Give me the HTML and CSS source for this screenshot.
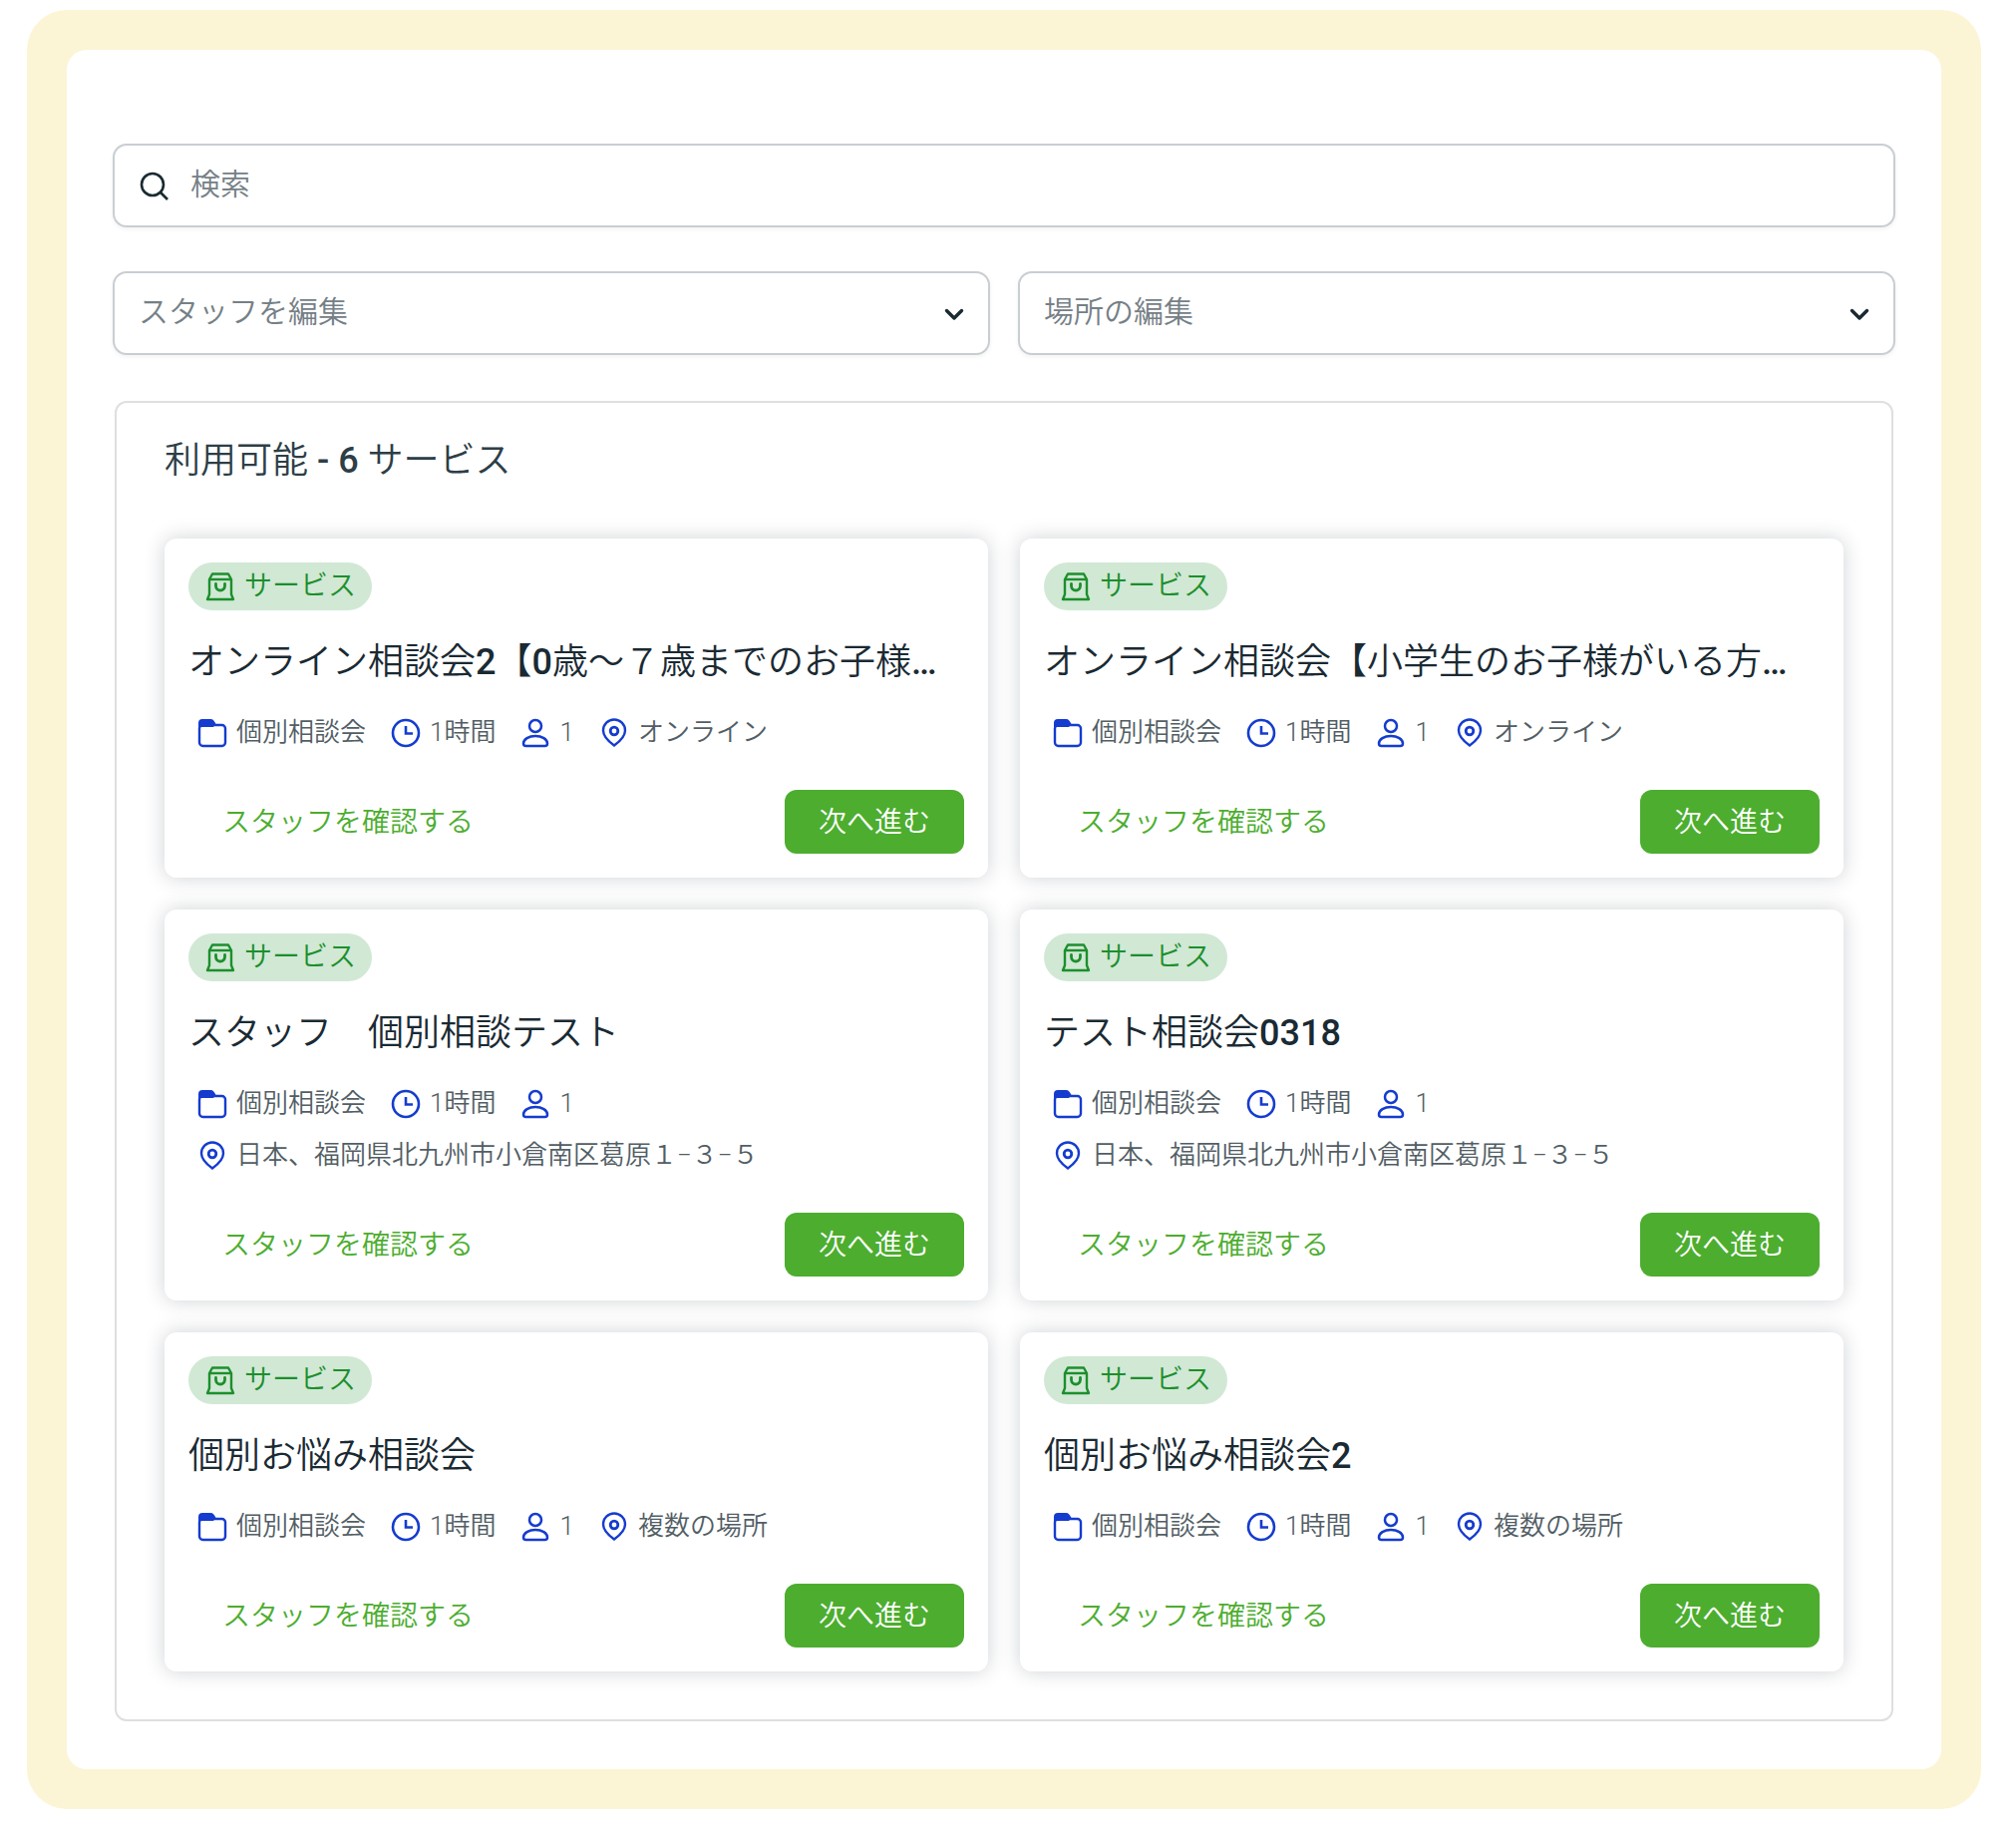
FILE: index.html
```html
<!DOCTYPE html>
<html lang="ja">
<head>
<meta charset="utf-8">
<meta name="viewport" content="width=device-width, initial-scale=1">
<title>サービス一覧</title>
<link rel="stylesheet" href="styles.css">
</head>
<body>
<svg class="sprite" aria-hidden="true">
  <symbol id="i-search" viewBox="0 0 32 32"><g fill="none" stroke="currentColor" stroke-width="2.6"><circle cx="14" cy="14" r="11"/><path d="M21.5 21.5 29 29"/></g></symbol>
  <symbol id="i-chevron" viewBox="0 0 32 32"><path d="M8.500 12.500 16 20l7.500-7.500" fill="none" stroke="currentColor" stroke-width="3.400" stroke-linecap="round" stroke-linejoin="round"/></symbol>
  <symbol id="i-bag" viewBox="0 0 32 32"><g fill="none" stroke="currentColor" stroke-width="2.400" stroke-linejoin="round"><path d="M5 9 8 3.500h16L27 9v15l2 5H3l2-5z"/><path d="M5 9h22"/><path d="M11.500 13.500v2a4.500 4.500 0 0 0 9 0v-2" stroke-width="2.800" stroke-linecap="round"/></g></symbol>
  <symbol id="i-folder" viewBox="0 0 32 32"><path d="M2 10V6a4 4 0 0 1 4-4h8c3 0 4 2 5.500 5L17 10z" fill="currentColor"/><rect x="3" y="8" width="26" height="21" rx="3.500" fill="none" stroke="currentColor" stroke-width="2.400"/></symbol>
  <symbol id="i-clock" viewBox="0 0 32 32"><g fill="none" stroke="currentColor" stroke-width="2.600"><circle cx="16" cy="16" r="13"/><path d="M16 9v7.500h7"/></g></symbol>
  <symbol id="i-person" viewBox="0 0 32 32"><g fill="none" stroke="currentColor" stroke-width="2.500"><circle cx="16" cy="9" r="6"/><path d="M4 26.500C4 22 9.500 19 16 19s12 3 12 7.500c0 1.500-1 2.500-2.500 2.500h-19C5 29 4 28 4 26.500z"/></g></symbol>
  <symbol id="i-pin" viewBox="0 0 32 32"><g fill="none" stroke="currentColor"><path d="M16 28.500C9 23.500 5 19 5 13.500a11 11 0 0 1 22 0c0 5.500-4 10-11 15z" stroke-width="2.400"/><circle cx="16" cy="14" r="3.800" stroke-width="2.800"/></g></symbol>
</svg>

<main class="frame">
  <div class="sheet">
    <form class="filters">
      <label class="field search">
        <svg class="icon"><use href="#i-search"/></svg>
        <input class="search-input" type="search" placeholder="検索" aria-label="検索">
      </label>
      <div class="selects">
        <div class="field">
          <select class="select" aria-label="スタッフを編集"><option>スタッフを編集</option></select>
          <svg class="icon chevron"><use href="#i-chevron"/></svg>
        </div>
        <div class="field">
          <select class="select" aria-label="場所の編集"><option>場所の編集</option></select>
          <svg class="icon chevron"><use href="#i-chevron"/></svg>
        </div>
      </div>
    </form>

    <section class="panel">
      <h1 class="panel-title"><span class="jp">利用可能</span> - 6 <span class="jp">サービス</span></h1>
      <div class="cards">

        <article class="card">
          <span class="badge"><svg class="icon"><use href="#i-bag"/></svg>サービス</span>
          <h2 class="card-title"><span class="jp">オンライン相談会</span>2<span class="jp">【</span>0<span class="jp">歳〜７歳までのお子様</span>…</h2>
          <ul class="meta">
            <li class="meta-item"><svg class="icon"><use href="#i-folder"/></svg>個別相談会</li>
            <li class="meta-item"><svg class="icon"><use href="#i-clock"/></svg>1時間</li>
            <li class="meta-item"><svg class="icon"><use href="#i-person"/></svg>1</li>
            <li class="meta-item"><svg class="icon"><use href="#i-pin"/></svg>オンライン</li>
          </ul>
          <div class="actions"><button class="btn btn-text" type="button">スタッフを確認する</button><button class="btn btn-primary" type="button">次へ進む</button></div>
        </article>

        <article class="card">
          <span class="badge"><svg class="icon"><use href="#i-bag"/></svg>サービス</span>
          <h2 class="card-title"><span class="jp">オンライン相談会【小学生のお子様がいる方</span>…</h2>
          <ul class="meta">
            <li class="meta-item"><svg class="icon"><use href="#i-folder"/></svg>個別相談会</li>
            <li class="meta-item"><svg class="icon"><use href="#i-clock"/></svg>1時間</li>
            <li class="meta-item"><svg class="icon"><use href="#i-person"/></svg>1</li>
            <li class="meta-item"><svg class="icon"><use href="#i-pin"/></svg>オンライン</li>
          </ul>
          <div class="actions"><button class="btn btn-text" type="button">スタッフを確認する</button><button class="btn btn-primary" type="button">次へ進む</button></div>
        </article>

        <article class="card">
          <span class="badge"><svg class="icon"><use href="#i-bag"/></svg>サービス</span>
          <h2 class="card-title"><span class="jp">スタッフ　個別相談テスト</span></h2>
          <ul class="meta">
            <li class="meta-item"><svg class="icon"><use href="#i-folder"/></svg>個別相談会</li>
            <li class="meta-item"><svg class="icon"><use href="#i-clock"/></svg>1時間</li>
            <li class="meta-item"><svg class="icon"><use href="#i-person"/></svg>1</li>
            <li class="meta-item"><svg class="icon"><use href="#i-pin"/></svg>日本、福岡県北九州市小倉南区葛原１−３−５</li>
          </ul>
          <div class="actions"><button class="btn btn-text" type="button">スタッフを確認する</button><button class="btn btn-primary" type="button">次へ進む</button></div>
        </article>

        <article class="card">
          <span class="badge"><svg class="icon"><use href="#i-bag"/></svg>サービス</span>
          <h2 class="card-title"><span class="jp">テスト相談会</span>0318</h2>
          <ul class="meta">
            <li class="meta-item"><svg class="icon"><use href="#i-folder"/></svg>個別相談会</li>
            <li class="meta-item"><svg class="icon"><use href="#i-clock"/></svg>1時間</li>
            <li class="meta-item"><svg class="icon"><use href="#i-person"/></svg>1</li>
            <li class="meta-item"><svg class="icon"><use href="#i-pin"/></svg>日本、福岡県北九州市小倉南区葛原１−３−５</li>
          </ul>
          <div class="actions"><button class="btn btn-text" type="button">スタッフを確認する</button><button class="btn btn-primary" type="button">次へ進む</button></div>
        </article>

        <article class="card">
          <span class="badge"><svg class="icon"><use href="#i-bag"/></svg>サービス</span>
          <h2 class="card-title"><span class="jp">個別お悩み相談会</span></h2>
          <ul class="meta">
            <li class="meta-item"><svg class="icon"><use href="#i-folder"/></svg>個別相談会</li>
            <li class="meta-item"><svg class="icon"><use href="#i-clock"/></svg>1時間</li>
            <li class="meta-item"><svg class="icon"><use href="#i-person"/></svg>1</li>
            <li class="meta-item"><svg class="icon"><use href="#i-pin"/></svg>複数の場所</li>
          </ul>
          <div class="actions"><button class="btn btn-text" type="button">スタッフを確認する</button><button class="btn btn-primary" type="button">次へ進む</button></div>
        </article>

        <article class="card">
          <span class="badge"><svg class="icon"><use href="#i-bag"/></svg>サービス</span>
          <h2 class="card-title"><span class="jp">個別お悩み相談会</span>2</h2>
          <ul class="meta">
            <li class="meta-item"><svg class="icon"><use href="#i-folder"/></svg>個別相談会</li>
            <li class="meta-item"><svg class="icon"><use href="#i-clock"/></svg>1時間</li>
            <li class="meta-item"><svg class="icon"><use href="#i-person"/></svg>1</li>
            <li class="meta-item"><svg class="icon"><use href="#i-pin"/></svg>複数の場所</li>
          </ul>
          <div class="actions"><button class="btn btn-text" type="button">スタッフを確認する</button><button class="btn btn-primary" type="button">次へ進む</button></div>
        </article>

      </div>
    </section>
  </div>
</main>
</body>
</html>
```
FILE: styles.css
```css
* {
  box-sizing: border-box;
}

body {
  margin: 0;
  padding: 10px 35px 26px 27px;
  background: #fff;
  color: #1a2a33;
  font-family: Roboto, "Noto Sans CJK JP", sans-serif;
  font-weight: 350;
}

.sprite {
  display: none;
}

.icon {
  flex: none;
  width: 32px;
  height: 32px;
}

.frame {
  padding: 40px;
  border-radius: 40px;
  background: #fbf5d6;
}

.sheet {
  padding: 94px 46px 48px;
  border-radius: 20px;
  background: #fff;
}

/* Search and filters */
.filters {
  display: grid;
  gap: 44px;
}

.selects {
  display: grid;
  grid-template-columns: 1fr 1fr;
  gap: 28px;
}

.field {
  position: relative;
  display: flex;
  align-items: center;
  height: 84px;
  border: 2px solid #c9ced2;
  border-radius: 14px;
  background: #fff;
  box-shadow: 0 2px 4px rgba(30, 50, 60, 0.06);
}

.field .icon {
  margin-top: 2px;
}

.search {
  gap: 20px;
  padding: 0 24px;
}

.search-input,
.select {
  flex: 1;
  min-width: 0;
  height: 100%;
  margin: 0;
  padding: 0 0 4px;
  border: 0;
  outline: 0;
  background: transparent;
  color: #758086;
  font: inherit;
  font-size: 30px;
  appearance: none;
}

.search-input::placeholder {
  color: #758086;
  opacity: 1;
}

.select {
  padding-right: 64px;
  padding-left: 24px;
}

.chevron {
  position: absolute;
  right: 18px;
  pointer-events: none;
}

/* Service list */
.panel {
  margin-top: 46px;
  margin-right: 2px;
  margin-left: 2px;
  padding: 34px 48px 48px;
  border: 2px solid #dddfe0;
  border-radius: 12px;
}

.panel-title {
  margin: 0 0 54px;
  color: #2d3e47;
  font-size: 36px;
  font-weight: 500;
  line-height: 48px;
}

.jp {
  font-weight: 350;
}

.cards {
  display: grid;
  grid-template-columns: repeat(2, minmax(0, 1fr));
  gap: 32px;
}

.card {
  display: flex;
  flex-direction: column;
  align-items: flex-start;
  padding: 24px;
  border-radius: 12px;
  background: #fff;
  box-shadow: 0 0 20px rgba(35, 50, 70, 0.22);
}

.badge {
  display: flex;
  align-items: center;
  gap: 8px;
  height: 48px;
  padding: 0 16px;
  border-radius: 24px;
  background: #d1e8d5;
  color: #1c8f2c;
  font-size: 28px;
  line-height: 32px;
}

.card-title {
  width: 100%;
  margin: 26px 0 18px;
  overflow: hidden;
  font-size: 36px;
  font-weight: 500;
  line-height: 52px;
  text-overflow: ellipsis;
  white-space: nowrap;
}

.meta {
  display: flex;
  flex-wrap: wrap;
  column-gap: 24px;
  margin: 0;
  padding: 0 0 0 8px;
  color: #525e65;
  font-size: 26px;
  line-height: 52px;
  list-style: none;
}

.meta-item {
  display: flex;
  align-items: center;
  gap: 8px;
}

.meta .icon {
  margin-top: 2px;
  color: #153ccf;
}

.actions {
  display: flex;
  justify-content: space-between;
  align-self: stretch;
  margin-top: 32px;
}

.btn {
  height: 64px;
  padding: 0 34px 4px;
  border: 0;
  border-radius: 12px;
  font: inherit;
  font-size: 28px;
  cursor: pointer;
}

.btn-text {
  background: transparent;
  color: #4dad2f;
}

.btn-primary {
  background: #4dad2f;
  color: #fff;
}
```
